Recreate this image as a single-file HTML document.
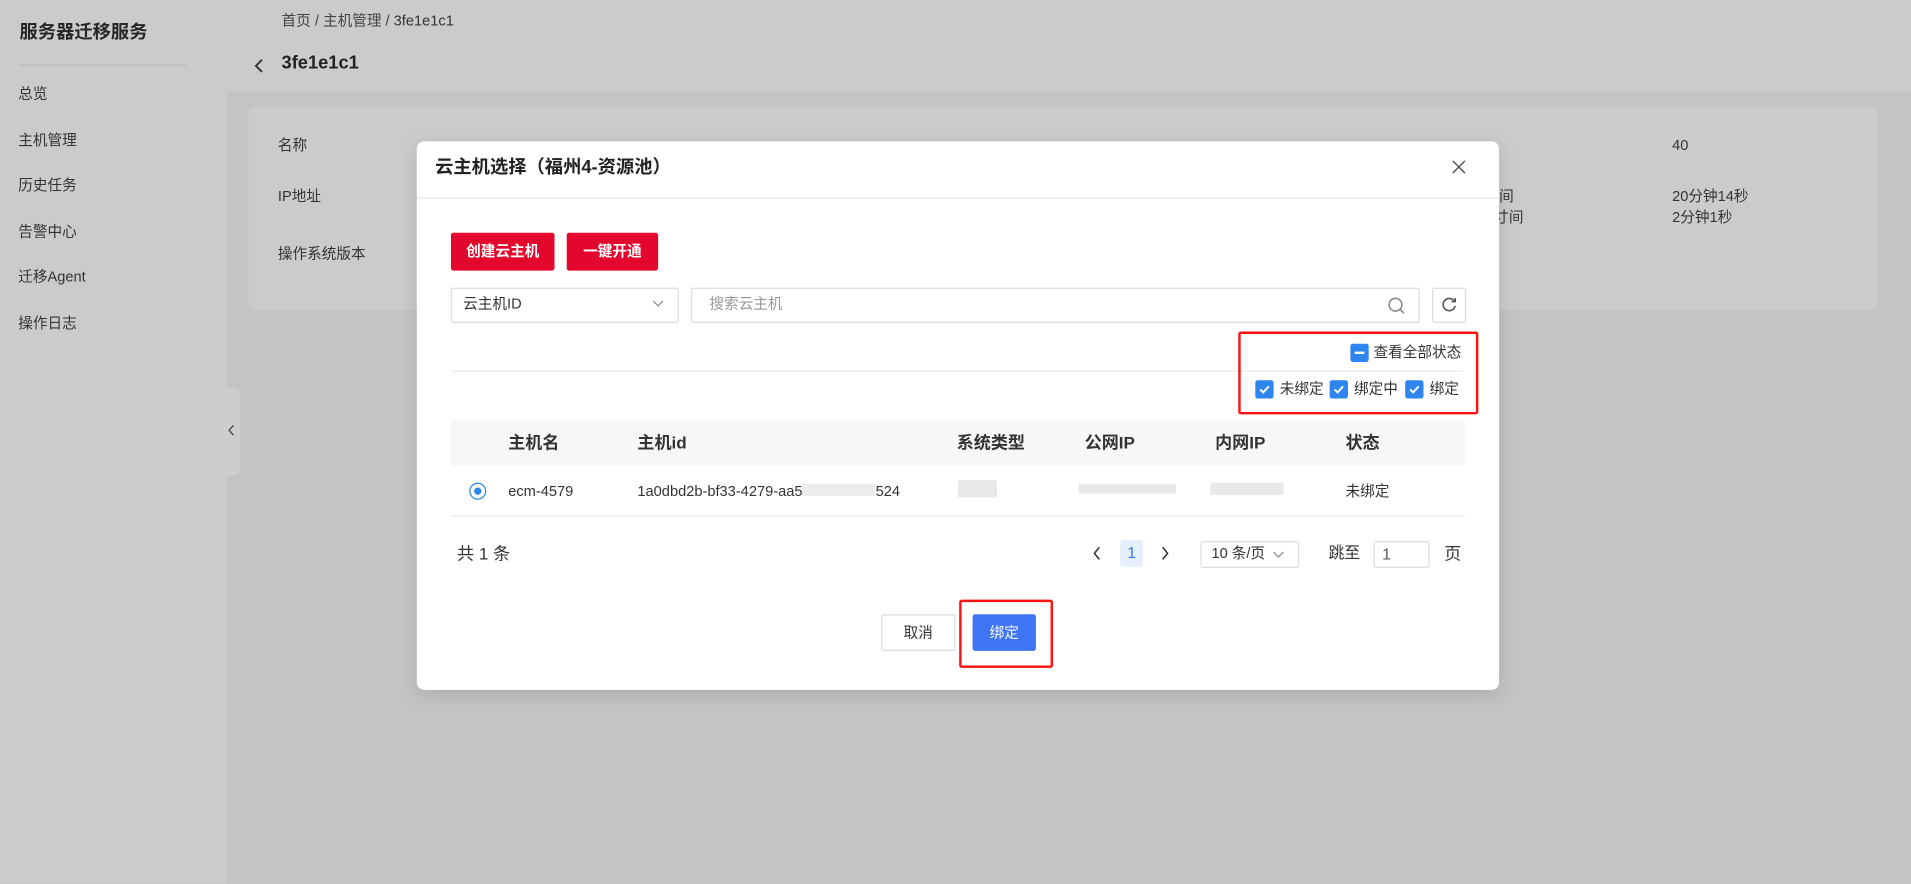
<!DOCTYPE html>
<html><head><meta charset="utf-8">
<style>
*{box-sizing:border-box;margin:0;padding:0}
html,body{width:1911px;height:883px;overflow:hidden;background:#c5c5c6;font-family:"Liberation Sans","Noto Sans CJK SC",sans-serif;color:#333;line-height:1.25}
#w{position:absolute;left:0;top:0;width:1568px;height:725px;transform:scale(1.21875);transform-origin:0 0;background:#c4c4c5}
.a{position:absolute;white-space:nowrap}
.t12{font-size:12px}
.cb{position:absolute;width:15px;height:15px;background:#2e85ee;border-radius:2px}
.cb svg{position:absolute;left:0;top:0}
.th{font-size:14px;font-weight:bold;color:#333;top:355px}
.td{font-size:12px;color:#333;top:396px}
.blur{position:absolute;background:#e8e8e8;height:10px}
</style></head><body><div id="w">
<!-- sidebar -->
<div class="a" style="left:0;top:0;width:186px;height:725px;background:#cbcbcb"></div>
<div class="a" style="left:16px;top:18px;font-size:15px;font-weight:bold;color:#262626">服务器迁移服务</div>
<div class="a" style="left:15px;top:53px;width:138px;height:1px;background:#b9b9b9"></div>
<div class="a t12" style="left:15px;top:70px">总览</div>
<div class="a t12" style="left:15px;top:108px">主机管理</div>
<div class="a t12" style="left:15px;top:145px">历史任务</div>
<div class="a t12" style="left:15px;top:183px">告警中心</div>
<div class="a t12" style="left:15px;top:220px">迁移Agent</div>
<div class="a t12" style="left:15px;top:258px">操作日志</div>
<div class="a" style="left:184px;top:318px;width:13px;height:72px;background:#cdcdcd;border-radius:0 6px 6px 0"></div>
<svg class="a" style="left:186px;top:348px" width="8" height="10"><path d="M5.5 1L2 5L5.5 9" stroke="#555" stroke-width="1.2" fill="none"/></svg>
<!-- header -->
<div class="a" style="left:186px;top:0;width:1382px;height:75px;background:#cbcbcb"></div>
<div class="a t12" style="left:231px;top:10px;color:#444">首页 / 主机管理 / <span style="color:#333">3fe1e1c1</span></div>
<svg class="a" style="left:207px;top:47px" width="12" height="14"><path d="M8 2 L3 7 L8 12" stroke="#333" stroke-width="1.6" fill="none"/></svg>
<div class="a" style="left:231px;top:43px;font-size:15px;font-weight:bold;color:#222">3fe1e1c1</div>
<!-- card -->
<div class="a" style="left:204px;top:88px;width:1336px;height:166px;background:#cbcbcb;border-radius:4px"></div>
<div class="a t12" style="left:228px;top:112px">名称</div>
<div class="a t12" style="left:228px;top:154px">IP地址</div>
<div class="a t12" style="left:228px;top:201px">操作系统版本</div>
<div class="a t12" style="left:1372px;top:112px">40</div>
<div class="a t12" style="left:1230px;top:154px">间</div>
<div class="a t12" style="left:1226px;top:171px">寸间</div>
<div class="a t12" style="left:1372px;top:154px">20分钟14秒</div>
<div class="a t12" style="left:1372px;top:171px">2分钟1秒</div>
<!-- modal -->
<div class="a" style="left:342px;top:116px;width:888px;height:450px;background:#fff;border-radius:6px;box-shadow:0 4px 16px rgba(0,0,0,.12)"></div>
<div class="a" style="left:357px;top:129px;font-size:15px;font-weight:bold;color:#222">云主机选择（福州4-资源池）</div>
<svg class="a" style="left:1191px;top:131px" width="12" height="12"><path d="M1 1L11 11M11 1L1 11" stroke="#555" stroke-width="1.2"/></svg>
<div class="a" style="left:342px;top:162px;width:888px;height:1px;background:#e6e8ee"></div>
<div class="a" style="left:370px;top:191px;width:85px;height:31px;background:#e3072d;border-radius:2px;color:#fff;font-size:12px;font-weight:bold;text-align:center;line-height:31px">创建云主机</div>
<div class="a" style="left:465px;top:191px;width:75px;height:31px;background:#e3072d;border-radius:2px;color:#fff;font-size:12px;font-weight:bold;text-align:center;line-height:31px">一键开通</div>
<div class="a" style="left:370px;top:236px;width:187px;height:29px;border:1px solid #dcdcdc;border-radius:2px"></div>
<div class="a t12" style="left:380px;top:242px;color:#333">云主机ID</div>
<svg class="a" style="left:535px;top:245px" width="10" height="8"><path d="M1 2L5 6L9 2" stroke="#888" fill="none"/></svg>
<div class="a" style="left:567px;top:236px;width:598px;height:29px;border:1px solid #dcdcdc;border-radius:2px"></div>
<div class="a t12" style="left:582px;top:242px;color:#999">搜索云主机</div>
<svg class="a" style="left:1138px;top:243px" width="16" height="16"><circle cx="7" cy="7" r="5.2" stroke="#888" stroke-width="1.3" fill="none"/><path d="M11 11L14 14" stroke="#888" stroke-width="1.3"/></svg>
<div class="a" style="left:1175px;top:236px;width:28px;height:29px;border:1px solid #dcdcdc;border-radius:2px"></div>
<svg class="a" style="left:1182px;top:243px" width="14" height="14"><path d="M11.5 4.5A5 5 0 1 0 12 8" stroke="#555" stroke-width="1.3" fill="none"/><path d="M9 4.5H12V1.5" stroke="#555" stroke-width="1.3" fill="none"/></svg>
<div class="a" style="left:370px;top:304px;width:830px;height:1px;background:#e8e8e8"></div>
<!-- status red box -->
<div class="a" style="left:1016px;top:272px;width:197px;height:68px;border:2px solid #f11;border-radius:2px"></div>
<div class="cb" style="left:1108px;top:282px"><svg width="15" height="15"><path d="M3.5 7.5H11.5" stroke="#fff" stroke-width="2"/></svg></div>
<div class="a t12" style="left:1127px;top:282px">查看全部状态</div>
<div class="cb" style="left:1030px;top:312px"><svg width="15" height="15"><path d="M4 7.5L6.5 10L11 5" stroke="#fff" stroke-width="1.6" fill="none"/></svg></div>
<div class="a t12" style="left:1050px;top:312px">未绑定</div>
<div class="cb" style="left:1091px;top:312px"><svg width="15" height="15"><path d="M4 7.5L6.5 10L11 5" stroke="#fff" stroke-width="1.6" fill="none"/></svg></div>
<div class="a t12" style="left:1111px;top:312px">绑定中</div>
<div class="cb" style="left:1153px;top:312px"><svg width="15" height="15"><path d="M4 7.5L6.5 10L11 5" stroke="#fff" stroke-width="1.6" fill="none"/></svg></div>
<div class="a t12" style="left:1173px;top:312px">绑定</div>
<!-- table -->
<div class="a" style="left:370px;top:344px;width:832px;height:38px;background:#f6f7f9"></div>
<div class="a th" style="left:417px">主机名</div>
<div class="a th" style="left:523px">主机id</div>
<div class="a th" style="left:785px">系统类型</div>
<div class="a th" style="left:890px">公网IP</div>
<div class="a th" style="left:997px">内网IP</div>
<div class="a th" style="left:1104px">状态</div>
<div class="a" style="left:385px;top:396px;width:14px;height:14px;border:1px solid #2e85ee;border-radius:50%"></div>
<div class="a" style="left:389px;top:400px;width:6px;height:6px;background:#2e85ee;border-radius:50%"></div>
<div class="a td" style="left:417px">ecm-4579</div>
<div class="a td" style="left:523px">1a0dbd2b-bf33-4279-aa5<span style="display:inline-block;width:60px;height:10px;background:#ececec"></span>524</div>
<div class="blur" style="left:786px;top:394px;width:32px;height:14px"></div>
<div class="blur" style="left:885px;top:397px;width:80px;height:8px"></div>
<div class="blur" style="left:993px;top:396px;width:60px;height:10px"></div>
<div class="a td" style="left:1104px">未绑定</div>
<div class="a" style="left:370px;top:423px;width:832px;height:1px;background:#e8e8e8"></div>
<!-- pagination -->
<div class="a" style="left:375px;top:446px;font-size:14px">共 1 条</div>
<svg class="a" style="left:896px;top:448px" width="8" height="12"><path d="M6 1L2 6L6 11" stroke="#333" stroke-width="1.3" fill="none"/></svg>
<div class="a" style="left:919px;top:443px;width:19px;height:22px;background:#e4eefd;border-radius:3px;color:#3d75f4;font-size:13px;text-align:center;line-height:22px">1</div>
<svg class="a" style="left:952px;top:448px" width="8" height="12"><path d="M2 1L6 6L2 11" stroke="#333" stroke-width="1.3" fill="none"/></svg>
<div class="a" style="left:985px;top:444px;width:81px;height:22px;border:1px solid #dcdcdc;border-radius:2px"></div>
<div class="a t12" style="left:994px;top:447px">10 条/页</div>
<svg class="a" style="left:1044px;top:451px" width="10" height="8"><path d="M1 2L5 6L9 2" stroke="#888" fill="none"/></svg>
<div class="a" style="left:1090px;top:446px;font-size:13px">跳至</div>
<div class="a" style="left:1127px;top:444px;width:46px;height:22px;border:1px solid #dcdcdc;border-radius:2px"></div>
<div class="a" style="left:1134px;top:447px;font-size:13px;color:#555">1</div>
<div class="a" style="left:1185px;top:446px;font-size:14px">页</div>
<!-- footer -->
<div class="a" style="left:723px;top:504px;width:61px;height:30px;border:1px solid #dcdcdc;border-radius:2px;font-size:12px;text-align:center;line-height:28px">取消</div>
<div class="a" style="left:798px;top:504px;width:52px;height:30px;background:#3d75f4;border-radius:2px;color:#fff;font-size:12px;text-align:center;line-height:30px">绑定</div>
<div class="a" style="left:787px;top:492px;width:77px;height:56px;border:2px solid #f11;border-radius:2px"></div>
</div></body></html>
